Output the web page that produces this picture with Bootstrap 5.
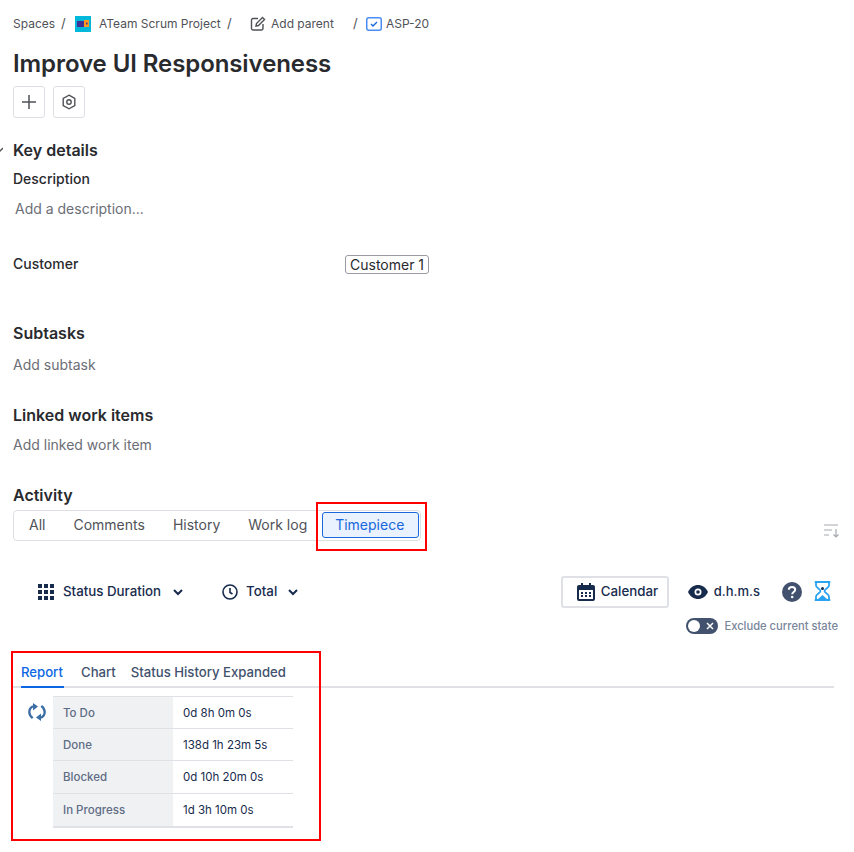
<!doctype html>
<html lang="en"><head><meta charset="utf-8"><title>ASP-20</title>
<link href="https://cdn.jsdelivr.net/npm/bootstrap@5.3.0/dist/css/bootstrap.min.css" rel="stylesheet">
<style>
html,body{height:852px;overflow:hidden}
body{font-family:Inter,"Noto Sans",sans-serif;color:#292a2e;background:#fff;font-size:14px;position:relative}
.pg{padding:0 13px}
.crumbs{height:48px;font-size:12px;color:#505258;align-items:center}
.sl{font-size:13px}
.proj{width:16px;height:16px;background:#00b8d9;display:flex;align-items:center;justify-content:center}
.ttl{font-size:24px;font-weight:600;line-height:32px;margin:0;color:#292a2e;letter-spacing:-.08px}
.sqb{width:32px;height:32px;border:1px solid #dcdfe4;border-radius:3px;background:#fff;padding:0;display:flex;align-items:center;justify-content:center}
.h-sec{font-size:16px;font-weight:600;line-height:20px;margin:0}
.lab{font-size:14px;font-weight:500;line-height:20px}
.ph{font-size:14px;color:#6b6e76;line-height:20px}
.cust{border:1px solid #9a9ca3;border-radius:3px;font-size:14px;line-height:17px;padding:0 4px;color:#292a2e}
.seg{border:1px solid #dcdfe4;border-radius:4px;height:31px;width:408px;align-items:center;padding:0 0 2px 2px;color:#505258}
.seg span{padding:0 14px}
.seg .on{height:26px;width:97px;border:1px solid #1868db;border-radius:3px;background:#e9f2fe;color:#1868db;padding:0 2px 0 0;display:flex;align-items:center;justify-content:center}
.tp{color:#172b4d;font-weight:500;font-size:13.3px}
.calb{border:2px solid #dfe1e6;border-radius:3px;height:32px;width:108px;display:flex;align-items:center;padding-left:14px;gap:6px;color:#172b4d;font-weight:500;font-size:13.3px}
.tog{width:32px;height:16px;border-radius:8px;background:#42526e;position:relative;display:block}
.tog i{position:absolute;left:2px;top:2px;width:12px;height:12px;border-radius:50%;background:#fff}
.exc{font-size:11.2px;color:#7a869a;font-weight:500}
.tbs{border-bottom:2px solid #dfe1e6;width:821px;height:33px;font-size:13.15px;font-weight:500;color:#42526e;gap:16px}
.tbs span{line-height:34px;height:33px}
.tbs .act{color:#0c66e4;border-bottom:2px solid #0c66e4;margin-left:8px;margin-right:1px;width:43px}
.dur{width:240px;border-collapse:collapse;font-size:11.5px;color:#172b4d;border-top:1px solid #dfe1e6;border-bottom:2px solid #dfe1e6}
.dur th{width:120px;background:#f0f1f3;color:#5e6c84;font-weight:500;padding:2px 10px 0;height:32px}
.dur td{padding:2px 10px 0;height:32px}
.dur tr.tall th,.dur tr.tall td{height:33px}
.dur tr+tr th,.dur tr+tr td{border-top:1px solid #dfe1e6}
.redb{position:absolute;border:2px solid #f00;pointer-events:none}
.edgemark{position:absolute;left:-3px;top:147px}
</style></head><body>
<svg class="edgemark" width="6" height="6" viewBox="0 0 6 6" fill="none" stroke="#505258" stroke-width="1.300"><path d="M0 1l3 3 3-3"/></svg>
<div class="pg">
<div class="crumbs d-flex">
<span style="width:42px">Spaces</span><span class="sl" style="margin-left:6px;width:14px">/</span>
<span class="proj"><svg width="12" height="8" viewBox="0 0 12 8"><rect x="0" y="1" width="7" height="6" fill="#403294"/><rect x="7" y="0" width="5" height="7" fill="#ff991f"/><rect x="9" y="2.500" width="1.500" height="2" fill="#403294"/></svg></span>
<span style="margin-left:8px;width:122px">ATeam Scrum Project</span><span class="sl" style="margin-left:6px;width:23px">/</span>
<svg width="16" height="16" viewBox="0 0 16 16" fill="none" stroke="#505258" stroke-width="1.400"><path d="M8 2.500H3a1.500 1.500 0 0 0-1.500 1.500v8.500A1.500 1.500 0 0 0 3 14h8.500a1.500 1.500 0 0 0 1.500-1.500V8"/><path d="M6 10l.5-2.500L12.500 1.500l2 2L8.500 9.500z"/></svg>
<span style="margin-left:5px;width:82px">Add parent</span><span class="sl" style="width:13px">/</span>
<svg width="16" height="14" viewBox="0 0 16 14" fill="none"><rect x=".75" y=".75" width="14.500" height="12.500" rx="2" stroke="#4c8df5" stroke-width="1.500"/><path d="M5 7l2 2 4-4" stroke="#1868db" stroke-width="1.400"/></svg>
<span style="margin-left:4px">ASP-20</span>
</div>
<h1 class="ttl">Improve UI Responsiveness</h1>
<div class="d-flex gap-2" style="margin-top:6px">
<button class="sqb" aria-label="Add"><svg width="16" height="16" viewBox="0 0 16 16" stroke="#505258" stroke-width="1.500"><path d="M8 1v14M1 8h14"/></svg></button>
<button class="sqb" aria-label="Apps"><svg width="16" height="16" viewBox="0 0 16 16" fill="none" stroke="#505258" stroke-width="1.400"><path d="M8 1.200l5.800 3.300v7L8 14.800l-5.800-3.300v-7z"/><circle cx="8" cy="8" r="2.200"/></svg></button>
</div>
<h2 class="h-sec" style="margin-top:22px">Key details</h2>
<div class="lab" style="margin-top:9px">Description</div>
<div class="ph" style="margin:10px 0 0 2px">Add a description...</div>
<div class="d-flex align-items-start" style="margin-top:35px">
<div class="lab" style="width:332px">Customer</div>
<span class="cust" style="margin-top:1px;height:19px">Customer 1</span>
</div>
<h2 class="h-sec" style="margin-top:49px">Subtasks</h2>
<div class="ph" style="margin-top:12px">Add subtask</div>
<h2 class="h-sec" style="margin-top:30px">Linked work items</h2>
<div class="ph" style="margin-top:10px">Add linked work item</div>
<h2 class="h-sec" style="margin-top:30px">Activity</h2>
<div class="d-flex align-items-end justify-content-between" style="margin-top:5px;width:827px">
<div class="seg d-flex">
<span style="padding-left:13px">All</span><span>Comments</span><span>History</span><span style="padding-right:15px">Work log</span><span class="on">Timepiece</span>
</div>
<svg width="16" height="14" viewBox="0 0 16 14" fill="none" stroke="#a6a9b0" stroke-width="1.200" style="margin-bottom:3px"><path d="M0 1h14M0 6h8M0 11h5M12 5v8M9.500 10.500L12 13l2.500-2.500"/></svg>
</div>
<div class="d-flex align-items-center" style="margin-top:35px;height:32px;padding-left:25px;width:818px">
<svg width="16" height="16" viewBox="0 0 16 16" fill="#172b4d"><g><rect width="4" height="4" x="0" y="0"/><rect width="4" height="4" x="6" y="0"/><rect width="4" height="4" x="12" y="0"/><rect width="4" height="4" x="0" y="6"/><rect width="4" height="4" x="6" y="6"/><rect width="4" height="4" x="12" y="6"/><rect width="4" height="4" x="0" y="12"/><rect width="4" height="4" x="6" y="12"/><rect width="4" height="4" x="12" y="12"/></g></svg>
<span class="tp" style="margin-left:9px">Status Duration</span>
<svg width="10" height="7" viewBox="0 0 10 7" fill="none" stroke="#172b4d" stroke-width="2" style="margin-left:12px"><path d="M1 1l4 4 4-4"/></svg>
<svg width="16" height="16" viewBox="0 0 16 16" fill="none" stroke="#172b4d" stroke-width="1.600" style="margin-left:39px"><circle cx="8" cy="8" r="7"/><path d="M8 4v4.500l2.500 1.500"/></svg>
<span class="tp" style="margin-left:8px">Total</span>
<svg width="10" height="7" viewBox="0 0 10 7" fill="none" stroke="#172b4d" stroke-width="2" style="margin-left:11px"><path d="M1 1l4 4 4-4"/></svg>
<div class="ms-auto d-flex align-items-center">
<div class="calb"><svg width="18" height="18" viewBox="0 0 18 18" fill="#172b4d"><path fill-rule="evenodd" d="M4 0h2v2h6V0h2v2h2a2 2 0 0 1 2 2v12a2 2 0 0 1-2 2H2a2 2 0 0 1-2-2V4a2 2 0 0 1 2-2h2zM2 7v9h14V7z"/><path d="M4 9h2v2H4zM8 9h2v2H8zM12 9h2v2h-2zM4 12h2v2H4zM8 12h2v2H8zM12 12h2v2h-2z"/></svg>Calendar</div>
<svg width="20" height="16" viewBox="0 0 20 16" style="margin-left:19px"><path fill="#172b4d" d="M0 8c2-4.500 6-7 10-7s8 2.500 10 7c-2 4.500-6 7-10 7S2 12.500 0 8z"/><circle cx="10" cy="8" r="3.500" fill="#fff"/><circle cx="10" cy="8" r="1.800" fill="#172b4d"/></svg>
<span class="tp" style="margin-left:6px;font-size:13px">d.h.m.s</span>
<svg width="20" height="20" viewBox="0 0 20 20" style="margin-left:22px"><circle cx="10" cy="10" r="10" fill="#42526e"/><path d="M6.800 7.800C6.800 5.900 8.300 5 10 5s3.200 1 3.200 2.700c0 2.300-3 2.300-3 4.600" fill="none" stroke="#fff" stroke-width="2"/><circle cx="10.200" cy="15" r="1.300" fill="#fff"/></svg>
<svg width="17" height="20" viewBox="0 0 17 20" fill="none" style="margin:0 0 2px 12px"><path d="M1.500 1h14M1.500 19h14" stroke="#2aa3f0" stroke-width="2" stroke-linecap="round"/><path d="M2 1v3.500c0 2.300 4.500 3.500 4.500 5.500S2 13.200 2 15.500V19M15 1v3.500c0 2.300-4.500 3.500-4.500 5.500s4.500 3.200 4.500 5.500V19" stroke="#2aa3f0" stroke-width="1.800"/><circle cx="8.500" cy="7.500" r="1.500" fill="#172b4d"/><path d="M8.500 14l5 4.500h-10z" fill="#2aa3f0"/></svg>
</div>
</div>
<div class="d-flex justify-content-end align-items-center" style="width:825px;margin-top:10px;height:16px;gap:6px">
<span class="tog"><i></i><svg width="8" height="8" viewBox="0 0 8 8" stroke="#fff" stroke-width="1.500" style="position:absolute;right:4px;top:4px"><path d="M1 1l6 6M7 1L1 7"/></svg></span>
<span class="exc">Exclude current state</span>
</div>
<div class="tbs d-flex" style="margin-top:21px">
<span class="act">Report</span><span style="margin-right:-1px">Chart</span><span>Status History Expanded</span>
</div>
<div class="d-flex" style="margin-top:8px">
<svg width="18" height="18" viewBox="0 0 18 18" fill="none" stroke="#3b6ea5" stroke-width="2.300" style="margin:7px 0 0 15px"><path d="M5 3.300C2.800 4.400 1.300 6.500 1.300 9c0 2.500 1.300 4.500 3.400 6.200"/><path d="M13 14.700c2.200-1.100 3.700-3.200 3.700-5.700 0-2.500-1.300-4.500-3.400-6.200"/><path d="M5 0v7.500L10 3.500zM13 18v-7.500l-5 4z" fill="#3b6ea5" stroke="none"/></svg>
<table class="dur" style="margin-left:7px">
<tr><th>To Do</th><td>0d 8h 0m 0s</td></tr>
<tr><th>Done</th><td>138d 1h 23m 5s</td></tr>
<tr class="tall"><th>Blocked</th><td>0d 10h 20m 0s</td></tr>
<tr class="tall"><th>In Progress</th><td>1d 3h 10m 0s</td></tr>
</table>
</div>
</div>
<div class="redb" style="left:316px;top:502px;width:111px;height:49px"></div>
<div class="redb" style="left:11px;top:651px;width:310px;height:190px"></div>
<script src="https://cdn.jsdelivr.net/npm/bootstrap@5.3.0/dist/js/bootstrap.bundle.min.js"></script>
</body></html>
